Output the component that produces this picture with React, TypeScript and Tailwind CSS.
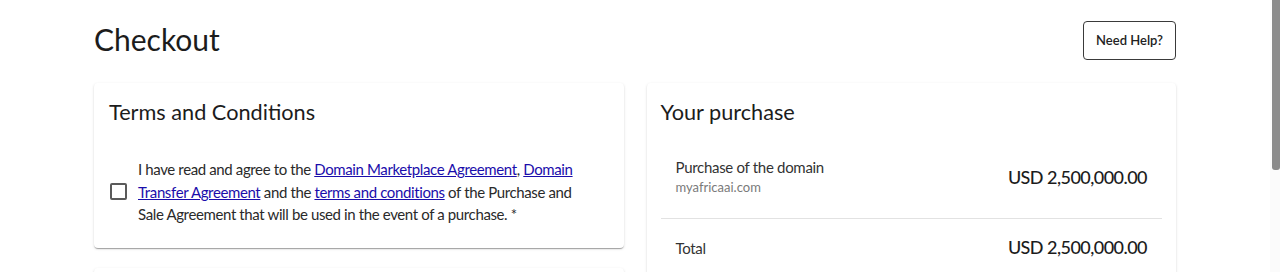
import React from 'react';

const font = { fontFamily: 'Lato, "Liberation Sans", sans-serif' };

const Checkout: React.FC = () => {
  return (
    <div className="flex h-[272px] overflow-hidden bg-white text-[#222]" style={font}>
      <main className="flex-1">
        <div className="mx-auto w-[1082px]">
          {/* Header */}
          <div className="flex items-start justify-between pt-[21px]">
            <h1 className="text-[30px] font-normal leading-[36px] text-[#1c1c1c]">Checkout</h1>
            <button className="h-[39px] w-[93px] rounded-[4px] border border-[#3a3a3a] text-[13px] font-semibold text-[#222]">
              Need Help?
            </button>
          </div>

          <div className="mt-[23px] grid grid-cols-2 gap-[23px]">
            {/* Left column */}
            <div className="flex flex-col gap-[20px]">
              <section className="rounded-[4px] bg-white px-[15px] pb-[22px] pt-[15px] shadow-[0_2px_1px_-1px_rgba(0,0,0,0.2),0_1px_1px_0_rgba(0,0,0,0.14),0_1px_3px_0_rgba(0,0,0,0.12)]">
                <h2 className="text-[21.7px] leading-[28px] text-[#1c1c1c]">Terms and Conditions</h2>
                <div className="mt-[32px] flex items-center gap-[11px] pl-[1px]">
                  <span className="h-[17px] w-[17px] shrink-0 rounded-[2px] border-2 border-[#5a5a5a]" />
                  <p className="max-w-[442px] text-[15px] leading-[22.5px] tracking-[-0.025em] text-[#2a2a2a]">
                    I have read and agree to the{' '}
                    <a href="#" className="text-[#1a0dab] underline">Domain Marketplace Agreement</a>,{' '}
                    <a href="#" className="text-[#1a0dab] underline">Domain Transfer Agreement</a> and the{' '}
                    <a href="#" className="text-[#1a0dab] underline">terms and conditions</a> of the Purchase and Sale
                    Agreement that will be used in the event of a purchase. *
                  </p>
                </div>
              </section>
              <section className="h-[120px] rounded-[4px] bg-white shadow-[0_2px_1px_-1px_rgba(0,0,0,0.2),0_1px_1px_0_rgba(0,0,0,0.14),0_1px_3px_0_rgba(0,0,0,0.12)]" />
            </div>

            {/* Right column */}
            <section className="h-[300px] rounded-[4px] bg-white px-[14px] pt-[15px] shadow-[0_2px_1px_-1px_rgba(0,0,0,0.2),0_1px_1px_0_rgba(0,0,0,0.14),0_1px_3px_0_rgba(0,0,0,0.12)]">
              <h2 className="text-[21.7px] leading-[28px] text-[#1c1c1c]">Your purchase</h2>
              <div className="mt-[31px] flex items-center justify-between px-[15px] pb-[21px]">
                <div>
                  <div className="text-[15px] leading-[20px] tracking-[-0.02em] text-[#333]">Purchase of the domain</div>
                  <div className="text-[13px] leading-[20px] text-[#7a7a7a]">myafricaai.com</div>
                </div>
                <div className="text-[18px] font-medium tracking-[-0.03em] text-[#1c1c1c]">USD 2,500,000.00</div>
              </div>
              <div className="h-px bg-[#e2e2e2]" />
              <div className="flex items-center justify-between px-[15px] pt-[15px]">
                <div className="text-[15px] leading-[22px] tracking-[-0.02em] text-[#333]">Total</div>
                <div className="text-[18px] font-medium tracking-[-0.03em] text-[#1c1c1c]">USD 2,500,000.00</div>
              </div>
            </section>
          </div>
        </div>
      </main>

      {/* Scrollbar */}
      <div className="flex w-[10px] justify-end bg-[#fbfbfb]">
        <div className="h-[170px] w-[8px] rounded-b-[3px] bg-[#8b8b8b]" />
      </div>
    </div>
  );
};

export default function App() {
  return <Checkout />;
}
